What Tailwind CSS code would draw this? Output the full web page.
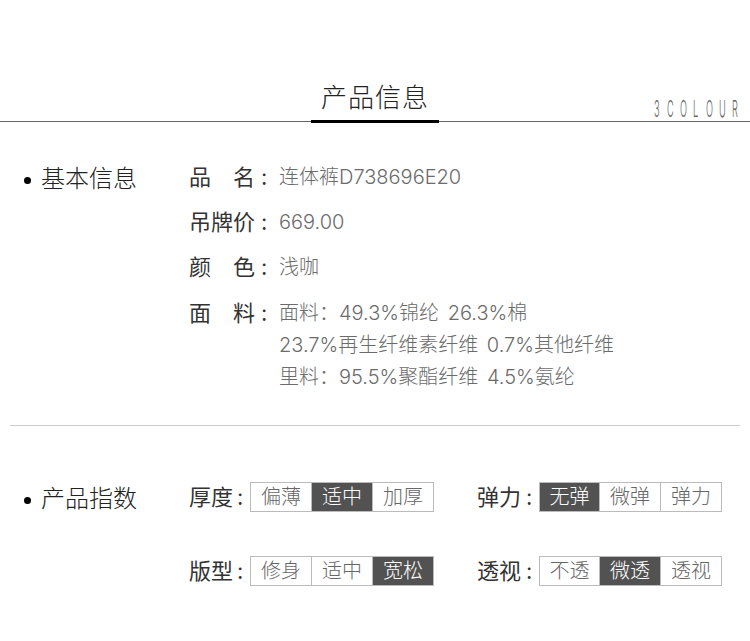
<!DOCTYPE html>
<html lang="zh">
<head>
<meta charset="utf-8">
<script src="https://cdn.jsdelivr.net/npm/@tailwindcss/browser@4"></script>
</head>
<body class="bg-white font-['Inter','Noto_Sans_CJK_SC',sans-serif] font-light">
<div class="w-[750px] h-[641px] overflow-hidden">
  <!-- title -->
  <div class="relative mt-[75px] h-[47px] border-b border-[#666]">
    <div class="absolute left-[311px] top-0 w-[128px] h-[48px] border-b-[3px] border-black text-center text-[26px] leading-[46px] tracking-[1px] text-[#222]">产品信息</div>
    <div class="absolute left-[654px] top-[25px] w-[84px] h-[19px] flex justify-between text-[#666] text-[23px] leading-[19px] font-['Inter'] font-light">
      <span class="inline-block origin-left scale-x-[.4] w-[6px]">3</span><span class="inline-block origin-left scale-x-[.4] w-[6px]">C</span><span class="inline-block origin-left scale-x-[.4] w-[6px]">O</span><span class="inline-block origin-left scale-x-[.4] w-[6px]">L</span><span class="inline-block origin-left scale-x-[.4] w-[6px]">O</span><span class="inline-block origin-left scale-x-[.4] w-[6px]">U</span><span class="inline-block origin-left scale-x-[.4] w-[6px]">R</span>
    </div>
  </div>

  <!-- basic info -->
  <div class="flex pl-[24px] pt-[39px] h-[303px]">
    <div class="w-[165px] pt-[1px] flex items-start text-[24px] leading-[34px] text-[#222]">
      <span class="w-[7px] h-[7px] rounded-full bg-black mt-[15px] mr-[10px]"></span>基本信息
    </div>
    <div class="flex flex-col gap-[13px] text-[20px] leading-[32px] text-[#6b6b6b]">
      <div class="flex"><span class="w-[90px] text-[22px] font-normal text-[#333] flex"><span class="w-[44px]">品</span><span class="w-[28px]">名</span><span>:</span></span><span>连体裤D738696E20</span></div>
      <div class="flex"><span class="w-[90px] text-[22px] font-normal text-[#333] flex"><span class="w-[72px] whitespace-nowrap">吊牌价</span><span>:</span></span><span>669.00</span></div>
      <div class="flex"><span class="w-[90px] text-[22px] font-normal text-[#333] flex"><span class="w-[44px]">颜</span><span class="w-[28px]">色</span><span>:</span></span><span>浅咖</span></div>
      <div class="flex mt-[1px]"><span class="w-[90px] text-[22px] font-normal text-[#333] flex"><span class="w-[44px]">面</span><span class="w-[28px]">料</span><span>:</span></span>
        <div class="whitespace-nowrap [word-spacing:3px]">面料：49.3%锦纶 26.3%棉<br>23.7%再生纤维素纤维 0.7%其他纤维<br>里料：95.5%聚酯纤维 4.5%氨纶</div>
      </div>
    </div>
  </div>
  <div class="mx-[10px] border-t border-[#ccc]"></div>

  <!-- product index -->
  <div class="flex pl-[24px] pt-[56px]">
    <div class="w-[165px] flex items-start text-[24px] leading-[34px] text-[#222]">
      <span class="w-[7px] h-[7px] rounded-full bg-black mt-[15px] mr-[10px]"></span>产品指数
    </div>
    <div class="grid grid-cols-[288px_auto] gap-y-[44px] text-[22px] font-normal text-[#333]">
      <div class="flex items-center h-[30px]">
        <span class="w-[44px] whitespace-nowrap">厚度</span><span class="w-[17px] pl-[4px]">:</span>
        <div class="flex border border-[#bbb] text-[20px] font-light text-[#666] leading-[28px] text-center divide-x divide-[#bbb]">
          <span class="w-[61px]">偏薄</span><span class="w-[61px] bg-[#525252] text-white">适中</span><span class="w-[60px]">加厚</span>
        </div>
      </div>
      <div class="flex items-center h-[30px]">
        <span class="w-[44px] whitespace-nowrap">弹力</span><span class="w-[18px] pl-[5px]">:</span>
        <div class="flex border border-[#bbb] text-[20px] font-light text-[#666] leading-[28px] text-center divide-x divide-[#bbb]">
          <span class="w-[60px] bg-[#525252] text-white">无弹</span><span class="w-[61px]">微弹</span><span class="w-[60px]">弹力</span>
        </div>
      </div>
      <div class="flex items-center h-[30px]">
        <span class="w-[44px] whitespace-nowrap">版型</span><span class="w-[17px] pl-[4px]">:</span>
        <div class="flex border border-[#bbb] text-[20px] font-light text-[#666] leading-[28px] text-center divide-x divide-[#bbb]">
          <span class="w-[61px]">修身</span><span class="w-[61px]">适中</span><span class="w-[60px] bg-[#525252] text-white">宽松</span>
        </div>
      </div>
      <div class="flex items-center h-[30px]">
        <span class="w-[44px] whitespace-nowrap">透视</span><span class="w-[18px] pl-[5px]">:</span>
        <div class="flex border border-[#bbb] text-[20px] font-light text-[#666] leading-[28px] text-center divide-x divide-[#bbb]">
          <span class="w-[60px]">不透</span><span class="w-[61px] bg-[#525252] text-white">微透</span><span class="w-[60px]">透视</span>
        </div>
      </div>
    </div>
  </div>
</div>
</body>
</html>
